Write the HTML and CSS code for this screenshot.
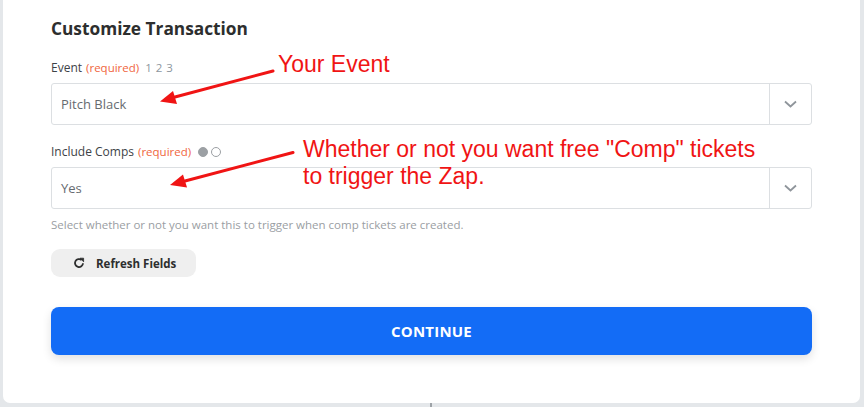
FILE: index.html
```html
<!DOCTYPE html>
<html>
<head>
<meta charset="utf-8">
<link rel="stylesheet" href="styles.css">
</head>
<body>
<div class="card">
  <h2 class="title">Customize Transaction</h2>

  <div class="field">
    <div class="label">Event <span class="req">(required)</span> <span class="nums">1 2 3</span></div>
    <div class="select">
      <div class="value">Pitch Black</div>
      <div class="caret"><svg width="13" height="8" viewBox="0 0 13 8"><path d="M1 1.5l5.5 5L12 1.5" fill="none" stroke="#8f959b" stroke-width="1.8"/></svg></div>
    </div>
  </div>

  <div class="field">
    <div class="label">Include Comps <span class="req">(required)</span> <span class="dots"><span class="dot on"></span><span class="dot"></span></span></div>
    <div class="select">
      <div class="value">Yes</div>
      <div class="caret"><svg width="13" height="8" viewBox="0 0 13 8"><path d="M1 1.5l5.5 5L12 1.5" fill="none" stroke="#8f959b" stroke-width="1.8"/></svg></div>
    </div>
    <div class="help">Select whether or not you want this to trigger when comp tickets are created.</div>
  </div>

  <button class="refresh"><svg width="12" height="12" viewBox="0 0 12 12"><path d="M10 6.2A4 4 0 1 1 8.6 3" fill="none" stroke="#2d2e2e" stroke-width="1.8"/><path d="M7 1.2h3.6v3.6z" fill="#2d2e2e" stroke="#2d2e2e" stroke-width="0.8" stroke-linejoin="round"/></svg><span>Refresh Fields</span></button>

  <button class="continue">CONTINUE</button>
</div>
<div class="connector"></div>

<div class="notes">
  <svg class="arrows" width="864" height="407" viewBox="0 0 864 407">
    <line x1="273" y1="71" x2="175" y2="97" stroke="#f01414" stroke-width="3" stroke-linecap="round"/>
    <polygon points="160,101.5 177,104 173,91" fill="#f01414"/>
    <line x1="293" y1="152.5" x2="185" y2="181" stroke="#f01414" stroke-width="3" stroke-linecap="round"/>
    <polygon points="170,185 187,187.5 183,174.5" fill="#f01414"/>
  </svg>
  <div class="note note1">Your Event</div>
  <div class="note note2">Whether or not you want free "Comp" tickets<br>to trigger the Zap.</div>
</div>
</body>
</html>
```

FILE: styles.css
```css
* { box-sizing: border-box; }
html, body { margin: 0; padding: 0; }
body {
  width: 864px;
  height: 407px;
  overflow: hidden;
  background: #e4e7ea;
  font-family: "Open Sans", "Liberation Sans", sans-serif;
  position: relative;
}
.card {
  margin-left: 3px;
  width: 857px;
  height: 403px;
  background: #fff;
  border-radius: 0 0 7px 7px;
  padding: 17px 48px 0 48px;
  display: flex;
  flex-direction: column;
}
.title {
  margin: 0;
  font-size: 17.3px;
  line-height: 24px;
  font-weight: 700;
  color: #2d2e2e;
}
.field { margin-top: 19px; display: flex; flex-direction: column; }
.field + .field { margin-top: 19px; }
.label {
  font-size: 12px;
  line-height: 16px;
  color: #3d4247;
  margin-bottom: 7px;
  display: flex;
  align-items: center;
  gap: 4px;
}
.req { color: #f0663e; font-size: 11.5px; }
.nums { color: #8d969e; font-size: 11.5px; margin-left: 2px; letter-spacing: 0.5px; }
.dots { display: inline-flex; gap: 3px; margin-left: 3px; }
.dot {
  width: 10px; height: 10px; border-radius: 50%;
  border: 1.5px solid #9ca0a4;
  background: #fff;
}
.dot.on { background: #9ca0a4; }
.select {
  height: 42px;
  border: 1px solid #dcdfe2;
  border-radius: 3px;
  display: flex;
  align-items: stretch;
}
.value {
  flex: 1;
  display: flex;
  align-items: center;
  padding-left: 9px;
  font-size: 13px;
  color: #666b70;
}
.caret {
  width: 42px;
  border-left: 1px solid #dcdfe2;
  display: flex;
  align-items: center;
  justify-content: center;
}
.help {
  margin-top: 8px;
  font-size: 11.5px;
  line-height: 16px;
  color: #9a9ea3;
}
.refresh {
  margin-top: 16px;
  align-self: flex-start;
  width: 145px;
  height: 28px;
  border: none;
  border-radius: 9px;
  background: #efefef;
  display: flex;
  align-items: center;
  padding: 0 0 0 22px;
  gap: 11px;
  font-family: "Open Sans", "Liberation Sans", sans-serif;
  font-size: 11.5px;
  font-weight: 700;
  color: #2d2e2e;
}
.continue {
  margin-top: 30px;
  height: 48px;
  border: none;
  border-radius: 8px;
  background: #136cf6;
  color: #fff;
  font-family: "Open Sans", "Liberation Sans", sans-serif;
  font-size: 15px;
  font-weight: 700;
  letter-spacing: 0.2px;
  box-shadow: 0 4px 10px rgba(0, 0, 0, 0.12);
}
.connector {
  position: absolute;
  left: 430px;
  top: 403px;
  width: 2px;
  height: 4px;
  background: #9ea3a8;
}
.notes {
  position: absolute;
  left: 0; top: 0;
  width: 864px; height: 407px;
  pointer-events: none;
}
.arrows { position: absolute; left: 0; top: 0; }
.note {
  position: absolute;
  font-family: "Liberation Sans", Arial, sans-serif;
  font-size: 23px;
  color: #f01414;
  white-space: nowrap;
}
.note1 { left: 278px; top: 52px; line-height: 25px; }
.note2 { left: 303px; top: 136px; line-height: 27px; }
```
